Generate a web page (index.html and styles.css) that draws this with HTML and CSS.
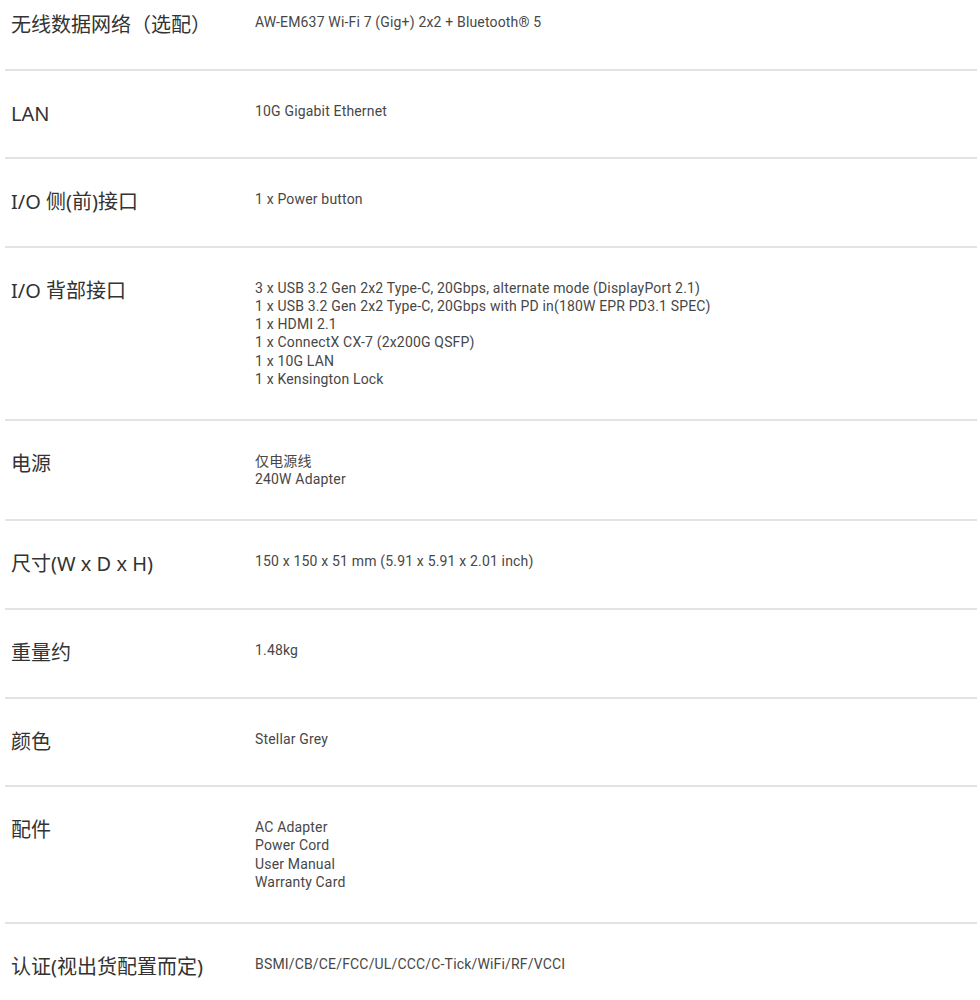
FILE: index.html
```html
<!DOCTYPE html>
<html lang="zh-CN">
<head>
    <meta charset="UTF-8">
    <meta name="viewport" content="width=device-width, initial-scale=1.0">
    <title>规格</title>
    <link rel="stylesheet" href="styles.css">
</head>
<body>
    <!-- 规格表 -->
    <div class="spec-table">
        <div class="spec-row">
            <div class="spec-label">无线数据网络（选配）</div>
            <div class="spec-value">AW-EM637 Wi-Fi 7 (Gig+) 2x2 + Bluetooth® 5</div>
        </div>
        <div class="spec-row">
            <div class="spec-label">LAN</div>
            <div class="spec-value">10G Gigabit Ethernet</div>
        </div>
        <div class="spec-row">
            <div class="spec-label">I/O 侧(前)接口</div>
            <div class="spec-value">1 x Power button</div>
        </div>
        <div class="spec-row">
            <div class="spec-label">I/O 背部接口</div>
            <div class="spec-value">
                3 x USB 3.2 Gen 2x2 Type-C, 20Gbps, alternate mode (DisplayPort 2.1)<br>
                1 x USB 3.2 Gen 2x2 Type-C, 20Gbps with PD in(180W EPR PD3.1 SPEC)<br>
                1 x HDMI 2.1<br>
                1 x ConnectX CX-7 (2x200G QSFP)<br>
                1 x 10G LAN<br>
                1 x Kensington Lock
            </div>
        </div>
        <div class="spec-row">
            <div class="spec-label">电源</div>
            <div class="spec-value">
                仅电源线<br>
                240W Adapter
            </div>
        </div>
        <div class="spec-row">
            <div class="spec-label">尺寸(W x D x H)</div>
            <div class="spec-value">150 x 150 x 51 mm (5.91 x 5.91 x 2.01 inch)</div>
        </div>
        <div class="spec-row">
            <div class="spec-label">重量约</div>
            <div class="spec-value">1.48kg</div>
        </div>
        <div class="spec-row">
            <div class="spec-label">颜色</div>
            <div class="spec-value">Stellar Grey</div>
        </div>
        <div class="spec-row">
            <div class="spec-label">配件</div>
            <div class="spec-value">
                AC Adapter<br>
                Power Cord<br>
                User Manual<br>
                Warranty Card
            </div>
        </div>
        <div class="spec-row">
            <div class="spec-label">认证(视出货配置而定)</div>
            <div class="spec-value">BSMI/CB/CE/FCC/UL/CCC/C-Tick/WiFi/RF/VCCI</div>
        </div>
    </div>
</body>
</html>
```

FILE: styles.css
```css
/* 全局 */
body {
    margin: 0;
    background: #fff;
    font-family: "Noto Sans", "Noto Sans CJK SC", sans-serif;
}

/* 规格表 */
.spec-table {
    margin: 0 3px 0 5px;
}
.spec-row {
    display: grid;
    grid-template-columns: 250px 1fr;
    padding: 31px 0;
    border-bottom: 2px solid #e3e3e3;
}
.spec-row:first-child {
    padding-top: 13px;
}
.spec-row:last-child {
    border-bottom: none;
}

.spec-label {
    padding-left: 6px;
    font-size: 20px;
    line-height: 24.6px;
    color: #333;
}
.spec-value {
    font-family: Roboto, "Noto Sans CJK SC", sans-serif;
    font-size: 14px;
    line-height: 18.2px;
    letter-spacing: 0.17px;
    color: #474747;
}
```
